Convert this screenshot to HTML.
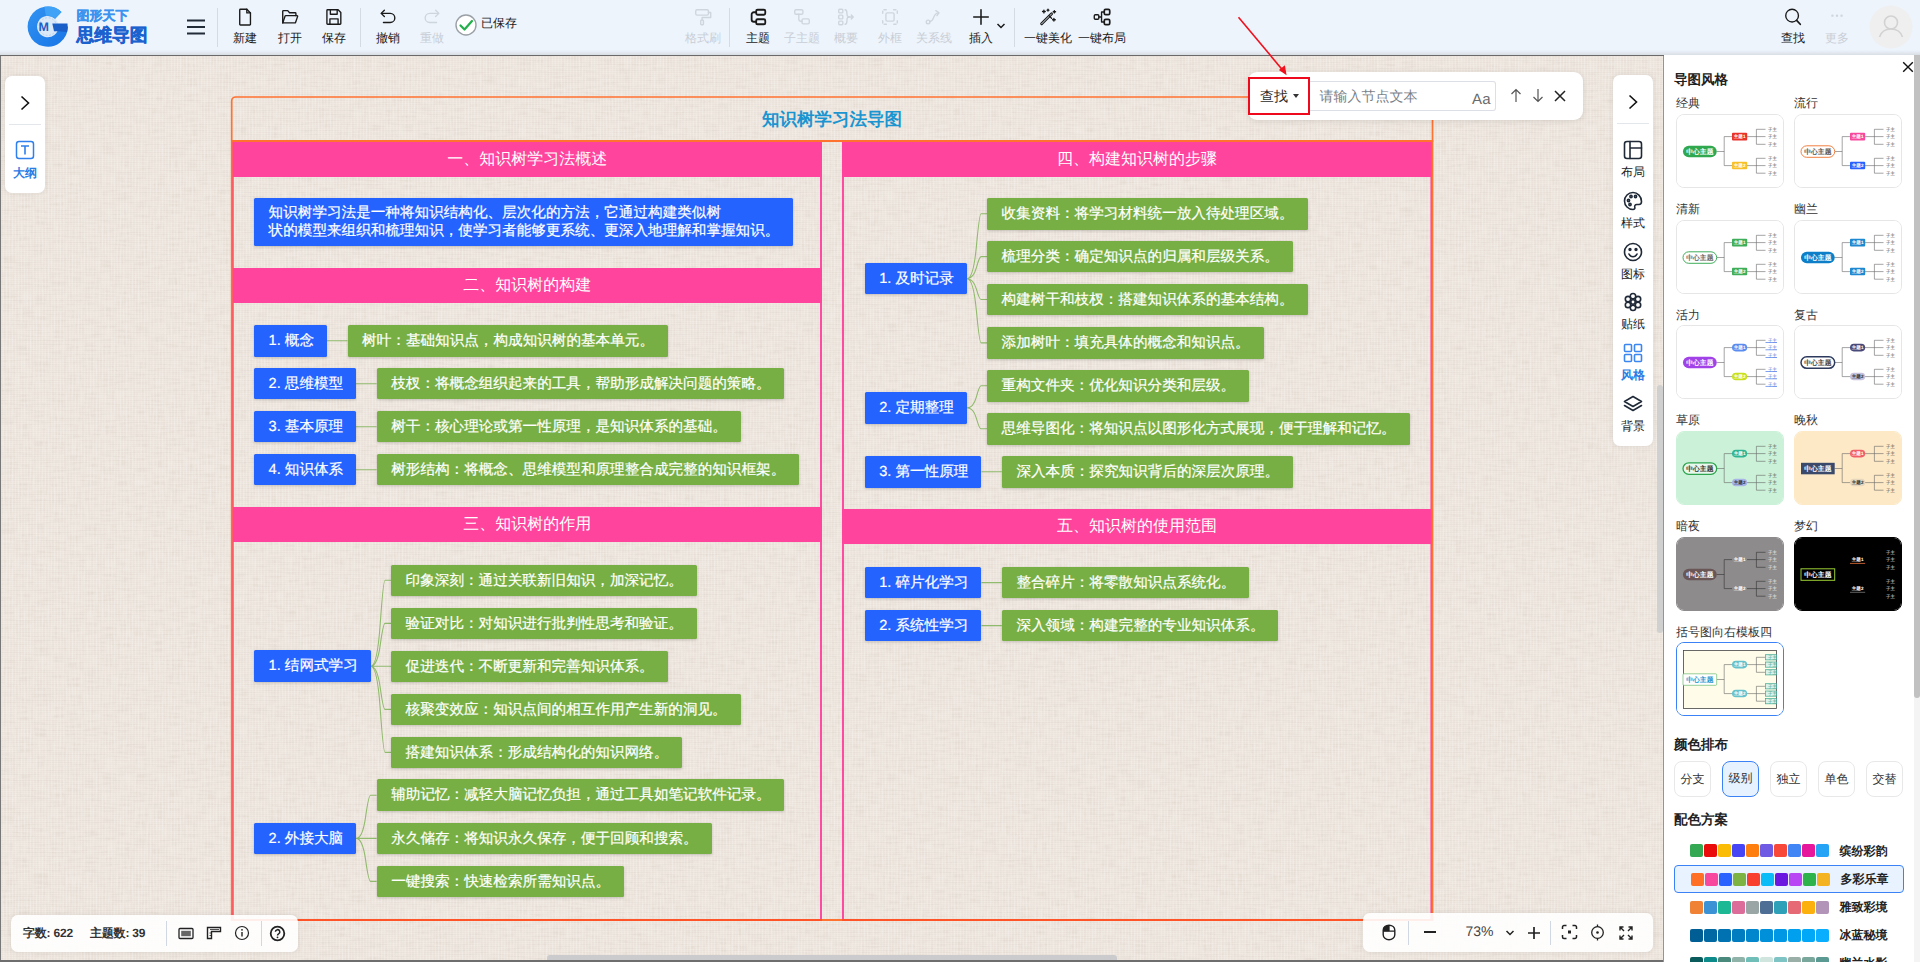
<!DOCTYPE html>
<html lang="zh"><head><meta charset="utf-8"><title>思维导图</title>
<style>
*{box-sizing:border-box;margin:0;padding:0}
html,body{width:1920px;height:962px;overflow:hidden}
body{text-rendering:geometricPrecision;font-family:"Liberation Sans",sans-serif;background:#edf4fc;position:relative;color:#1a1a1a}
.abs{position:absolute}
#toolbar{position:absolute;left:0;top:0;width:1920px;height:55px;background:#edf4fc}
#tbshadow{position:absolute;left:0;top:50px;width:1920px;height:5px;background:linear-gradient(to bottom,rgba(205,208,214,0),rgba(205,208,214,.6))}
#tbline{position:absolute;left:0;top:55px;width:1664px;height:1px;background:#6a6a6a}
.tb{position:absolute;top:0;height:55px;width:60px;margin-left:-30px;text-align:center}
.tb svg{position:absolute;left:50%;top:7px;margin-left:-10px;width:20px;height:20px;fill:none;stroke:#1a1a1a;stroke-width:1.5;stroke-linecap:round;stroke-linejoin:round}
.tb span{position:absolute;left:-10px;right:-10px;top:31px;font-size:12px;line-height:15px;color:#1a1a1a;white-space:nowrap}
.tb.dis svg{stroke:#cfd5dc}
.tb.dis span{color:#c9ced5}
.vsep{position:absolute;top:8px;width:1px;height:39px;background:#d5dbe3}
#canvas{position:absolute;left:0;top:56px;width:1664px;height:906px;overflow:hidden;background-color:#ede5dd;background-image:repeating-linear-gradient(0deg,rgba(255,255,255,.13) 0 1px,rgba(255,255,255,0) 1px 2px),repeating-linear-gradient(90deg,rgba(255,255,255,.10) 0 1px,rgba(120,95,70,.02) 1px 3px)}
#canvas .tex{position:absolute;left:0;top:0;width:100%;height:100%}
.panel{position:absolute;background:#fff;border-radius:7px;box-shadow:0 0 6px rgba(0,0,0,.08)}
.node{position:absolute;color:#fff;font-size:14.6px;line-height:17.5px;white-space:nowrap;border-radius:1.5px;padding:8px 0 0 14.6px;-webkit-text-stroke:.2px #fff;box-shadow:0 1px 3px rgba(0,0,0,.18)}
.bl{background:#2563ff}
.gr{background:#78af44}
.hd{position:absolute;background:#ff449e;color:#fff;font-size:16px;line-height:35px;text-align:center;height:35px;white-space:nowrap}
.ib{position:absolute;left:0;width:40px;text-align:center}
.ib svg{position:absolute;left:9px;width:22px;height:22px;fill:none;stroke:#1f2937;stroke-width:1.6;stroke-linecap:round;stroke-linejoin:round}
.ib span{position:absolute;left:0;width:40px;font-size:12px;line-height:14px;color:#222}
#rp{position:absolute;left:1664px;top:56px;width:256px;height:906px;background:#fff;overflow:hidden}
.rl{position:absolute;font-size:12px;line-height:14px;color:#333;white-space:nowrap}
.rh{position:absolute;font-size:13.5px;line-height:16px;color:#222;font-weight:bold;white-space:nowrap}
.card{position:absolute;width:108px;height:74px;border-radius:8px;border:1px solid #e6e6e6;background:#fff;overflow:hidden}
.cbtn{position:absolute;top:705px;width:37px;height:36px;border:1px solid #e8e8e8;border-radius:8px;font-size:12px;line-height:34px;text-align:center;color:#333;background:#fff}
.sw{position:absolute;height:13px}
.sw i{position:absolute;top:0;width:13px;height:13px;border-radius:2px}
.swl{position:absolute;left:175px;font-size:12px;line-height:14px;font-weight:bold;color:#222;white-space:nowrap}
</style></head>
<body>
<div id="toolbar">
<svg class="abs" style="left:27px;top:6px;width:42px;height:42px" viewBox="0 0 42 42">
<defs><linearGradient id="lg1" x1="0" y1="0" x2="1" y2="1"><stop offset="0" stop-color="#2f8ff0"/><stop offset="1" stop-color="#1a78e8"/></linearGradient></defs>
<circle cx="20.8" cy="20.6" r="10.800" fill="#dbe8f8"/>
<circle cx="20.8" cy="20.6" r="8.800" fill="none" stroke="#a9c8ee" stroke-width=".7" stroke-dasharray="2 1.500"/>
<path d="M31.30 9.34A15.4 15.4 0 1 0 36.20 20.60" fill="none" stroke="url(#lg1)" stroke-width="9.400"/>
<path d="M31.30 9.34A15.4 15.4 0 0 0 18.13 5.43" fill="none" stroke="#3fa2f7" stroke-width="9.400"/>
<path d="M25.300 17.400H40.500A20 20 0 0 1 40 26L31 25.200H27z" fill="#1a5fc8"/>
<text x="11.400" y="25.300" font-family="Liberation Sans, sans-serif" font-weight="bold" font-size="12.500" fill="#1c5fc9">M</text>
</svg>
<div class="abs" style="left:76.500px;top:9px;font-size:13px;line-height:14px;font-weight:bold;color:#3d94ef;white-space:nowrap;-webkit-text-stroke:.35px #3d94ef">图形天下</div>
<div class="abs" style="left:76.500px;top:24px;font-size:17.800px;line-height:22px;font-weight:bold;color:#1b62cf;white-space:nowrap;-webkit-text-stroke:.5px #1b62cf">思维导图</div>
<svg class="abs" style="left:186px;top:19px;width:20px;height:16px" viewBox="0 0 20 16"><path d="M1 1.500h18M1 8h18M1 14.500h18" stroke="#222b38" stroke-width="1.800" fill="none"/></svg>
<div class="vsep" style="left:217px"></div>
<div class="tb" style="left:245px"><svg viewBox="0 0 22 22" style=""><path d="M6 2.5h7l4 4v12.5a.8.8 0 0 1-.8.8H6a.8.8 0 0 1-.8-.8V3.3a.8.8 0 0 1 .8-.8z"/><path d="M13 2.5v4h4"/></svg><span>新建</span></div>
<div class="tb" style="left:290px"><svg viewBox="0 0 22 22" style=""><path d="M3 17.5V4.8a.8.8 0 0 1 .8-.8h4.7l2 2.3h6.2a.8.8 0 0 1 .8.8v2.4"/><path d="M3 17.5l2.6-7.5a.8.8 0 0 1 .8-.5h12.4a.6.6 0 0 1 .6.8l-2.3 6.7a.8.8 0 0 1-.8.5z"/></svg><span>打开</span></div>
<div class="tb" style="left:334px"><svg viewBox="0 0 22 22" style=""><path d="M4 3h11.5l3 3v12.2a.8.8 0 0 1-.8.8H4a.8.8 0 0 1-.8-.8V3.8A.8.8 0 0 1 4 3z"/><path d="M7 3v5h7.5V3"/><path d="M6.5 19v-6h9v6"/></svg><span>保存</span></div>
<div class="vsep" style="left:360px"></div>
<div class="tb" style="left:388px"><svg viewBox="0 0 22 22" style=""><path d="M7 3.5L3.5 7 7 10.5"/><path d="M3.8 7h9.7a5 5 0 0 1 0 10H6"/></svg><span>撤销</span></div>
<div class="tb dis" style="left:432px"><svg viewBox="0 0 22 22" style=""><path d="M15 3.5L18.500 7 15 10.500"/><path d="M18.200 7H8.500a5 5 0 0 0 0 10H16"/></svg><span>重做</span></div>
<svg class="abs" style="left:454px;top:13px;width:24px;height:24px" viewBox="0 0 24 24"><circle cx="12" cy="12" r="10" fill="#fff" stroke="#9aa0a6" stroke-width="1.400"/><path d="M6.500 12.500l4 4 7.500-8.500" stroke="#21b04b" stroke-width="2.200" fill="none" stroke-linecap="round" stroke-linejoin="round"/></svg>
<div class="abs" style="left:481px;top:16px;font-size:12px;line-height:15px;color:#1a1a1a;white-space:nowrap">已保存</div>
<div class="tb dis" style="left:703px"><svg viewBox="0 0 22 22" style=""><rect x="3" y="3" width="14" height="6" rx="1.500"/><path d="M17 6h2.500v5.500H10v3"/><rect x="8.500" y="14.500" width="3" height="5" rx=".8"/></svg><span>格式刷</span></div>
<div class="vsep" style="left:729px"></div>
<div class="tb" style="left:758px"><svg viewBox="0 0 22 22" style=""><rect x="9" y="3" width="10" height="5.500" rx="1.500" stroke-width="2"/><rect x="9" y="13.500" width="10" height="5.500" rx="1.500" stroke-width="2"/><path d="M9 5.750H6.500A2.500 2.500 0 0 0 4 8.250v5.500a2.500 2.500 0 0 0 2.500 2.500H9" stroke-width="2"/></svg><span>主题</span></div>
<div class="tb dis" style="left:802px"><svg viewBox="0 0 22 22" style=""><rect x="3" y="3" width="9" height="5" rx="1.500"/><rect x="11" y="13" width="8" height="5.500" rx="1.500"/><path d="M7.500 8v5.500a2.200 2.200 0 0 0 2.200 2.200H11"/></svg><span>子主题</span></div>
<div class="tb dis" style="left:846px"><svg viewBox="0 0 22 22" style=""><rect x="3" y="2.500" width="4.500" height="4" rx="1"/><rect x="3" y="9" width="4.500" height="4" rx="1"/><rect x="3" y="15.500" width="4.500" height="4" rx="1"/><path d="M10 3c2 0 2 2 2 4s0 4 2.500 4c-2.500 0-2.500 2-2.500 4s0 4-2 4"/><path d="M14.500 11H19M16.800 8.700L19 11l-2.200 2.300"/></svg><span>概要</span></div>
<div class="tb dis" style="left:890px"><svg viewBox="0 0 22 22" style=""><path d="M3 7V4.500A1.500 1.500 0 0 1 4.500 3H7M15 3h2.500A1.500 1.500 0 0 1 19 4.500V7M19 15v2.500a1.500 1.500 0 0 1-1.500 1.500H15M7 19H4.500A1.500 1.500 0 0 1 3 17.500V15" stroke-dasharray="2.500 2"/><rect x="6.500" y="6.500" width="9" height="9" rx="1.500"/></svg><span>外框</span></div>
<div class="tb dis" style="left:934px"><svg viewBox="0 0 22 22" style=""><circle cx="4.500" cy="16.500" r="2"/><path d="M6.500 16c5 0 3-9 9-9.500"/><path d="M13 4l3.500 2.300-2.300 3.200"/></svg><span>关系线</span></div>
<div class="tb" style="left:981px"><svg viewBox="0 0 22 22" style=""><path d="M11 3v16M3 11h16" stroke-width="1.700"/></svg><span>插入</span></div>
<svg class="abs" style="left:996px;top:22px;width:10px;height:8px" viewBox="0 0 10 8"><path d="M1.500 2l3.500 3.500L8.500 2" stroke="#1a1a1a" stroke-width="1.500" fill="none"/></svg>
<div class="vsep" style="left:1014px"></div>
<div class="tb" style="left:1048px"><svg viewBox="0 0 22 22" style=""><path d="M4 18.500L15 7.500" stroke-width="3.200"/><path d="M4 18.500L15 7.500" stroke="#edf4fc" stroke-width="1"/><path d="M12.500 10l2.500 2.500"/><path d="M6.500 3.500v3M5 5h3M17.500 12.500v3M16 14h3M11 2.500v2M10 3.500h2M18 4v2.500M16.800 5.200h2.500"/></svg><span>一键美化</span></div>
<div class="tb" style="left:1102px"><svg viewBox="0 0 22 22" style=""><rect x="2.500" y="8.500" width="5" height="5" rx="1.200"/><rect x="13.500" y="2.500" width="6" height="6" rx="1.500" stroke-width="1.900"/><rect x="13.500" y="13.500" width="6" height="6" rx="1.500" stroke-width="1.900"/><path d="M7.500 11h3M10.500 5.500v11M10.500 5.500h3M10.500 16.500h3"/></svg><span>一键布局</span></div>
<div class="tb" style="left:1793px"><svg viewBox="0 0 22 22" style=""><circle cx="10" cy="9.500" r="7"/><path d="M15 14.800l4 4.200" stroke-width="1.900"/></svg><span>查找</span></div>
<div class="tb dis" style="left:1837px"><svg viewBox="0 0 22 22" style=""><circle cx="6" cy="9.500" r=".6"/><circle cx="11" cy="9.500" r=".6"/><circle cx="16" cy="9.500" r=".6"/></svg><span>更多</span></div>
<svg class="abs" style="left:1869px;top:5px;width:44px;height:44px" viewBox="0 0 44 44"><circle cx="22" cy="22" r="21.500" fill="#efefef"/><circle cx="22" cy="17.500" r="6.500" fill="none" stroke="#d2d2d2" stroke-width="1.600"/><path d="M10.500 32c2-6 6-8 11.500-8s9.500 2 11.500 8" fill="none" stroke="#d2d2d2" stroke-width="1.600"/></svg>
<div id="tbshadow"></div></div><div id="tbline"></div>
<div id="canvas">
<svg class="tex" width="1664" height="906"><defs>
<filter id="lin" x="0" y="0" width="100%" height="100%"><feTurbulence type="fractalNoise" baseFrequency="0.06 0.5" numOctaves="1" seed="3" result="a"/><feColorMatrix in="a" type="matrix" values="0 0 0 0 0.45  0 0 0 0 0.38  0 0 0 0 0.30  0 0 0 -1.6 0.95" result="ha"/>
<feTurbulence type="fractalNoise" baseFrequency="0.5 0.06" numOctaves="1" seed="8" result="b"/><feColorMatrix in="b" type="matrix" values="0 0 0 0 1  0 0 0 0 1  0 0 0 0 1  0 0 0 1.6 -0.62" result="vb"/>
<feMerge><feMergeNode in="ha"/><feMergeNode in="vb"/></feMerge></filter></defs>
<rect width="1664" height="906" filter="url(#lin)" opacity=".2"/></svg>
<svg class="abs" style="left:0;top:0" width="1664" height="906" fill="none">
<path d="M232.800 86V863.5M821 86V863.5M843 86V863.5M1431.400 86V863.5" stroke="#ff449e" stroke-width="1.900"/>
<path d="M231.700 864V45a4 4 0 0 1 4-4H1428.500a4 4 0 0 1 4 4V864" stroke="#ff7230" stroke-width="1.700"/>
<path d="M231 85H1433.300" stroke="#ff7230" stroke-width="1.900"/>
<path d="M230.900 864H1433.400" stroke="#ff7230" stroke-width="1.900"/>
<path d="M231 864H822M842 864H1433" stroke="#ff5428" stroke-width="1.900"/>
</svg>
<div class="abs" style="left:232px;top:51px;width:1200px;text-align:center;font-size:17.5px;line-height:24px;font-weight:bold;color:#1b95d0;white-space:nowrap">知识树学习法导图</div>
<div class="hd" style="left:232.8px;top:86px;width:588.8px">一、知识树学习法概述</div>
<div class="hd" style="left:232.8px;top:211.5px;width:588.8px">二、知识树的构建</div>
<div class="hd" style="left:232.8px;top:451px;width:588.8px">三、知识树的作用</div>
<div class="hd" style="left:842.4px;top:86px;width:589px">四、构建知识树的步骤</div>
<div class="hd" style="left:842.4px;top:453px;width:589px">五、知识树的使用范围</div>
<svg class="abs" style="left:0;top:0" width="1664" height="906" fill="none"><path d="M327 284.7H347.5M356 327.7H376.6M356 370.7H376.6M356 413.7H376.6M981.4 415.8H1001.8M981.4 526.6H1001.8M981.4 569.6H1001.8M370.8 610.2Q377.264 610.2 380.264 567.2T385 524.2H391M370.8 610.2Q377.264 610.2 380.264 588.8T385 567.4H391M370.8 610.2H391M370.8 610.2Q377.264 610.2 380.264 631.8T385 653.4H391M370.8 610.2Q377.264 610.2 380.264 653.3T385 696.4H391M356 782.4Q362.592 782.4 365.592 760.8T370.6 739.2H376.6M356 782.4H376.6M356 782.4Q362.592 782.4 365.592 803.9T370.6 825.4H376.6M967 222.7Q973.4 222.7 976.4 190.2T981 157.7H987M967 222.7Q973.4 222.7 976.4 211.64999999999998T981 200.60000000000002H987M967 222.7Q973.4 222.7 976.4 233.10000000000002T981 243.5H987M967 222.7Q973.4 222.7 976.4 254.79999999999995T981 286.9H987M967 351.8Q973.4 351.8 976.4 340.8T981 329.8H987M967 351.8Q973.4 351.8 976.4 362.3T981 372.8H987" stroke="#90ba6c" stroke-width="1.100"/></svg>
<div class="node bl" style="left:254px;top:142.2px;width:539px;height:47.5px;padding-top:7px">知识树学习法是一种将知识结构化、层次化的方法，它通过构建类似树<br>状的模型来组织和梳理知识，使学习者能够更系统、更深入地理解和掌握知识。</div>
<div class="node bl" style="left:254px;top:269px;width:73px;height:31.5px">1. 概念</div>
<div class="node gr" style="left:347.5px;top:269px;width:320.5px;height:31.5px">树叶：基础知识点，构成知识树的基本单元。</div>
<div class="node bl" style="left:254px;top:311.9px;width:102px;height:31.5px">2. 思维模型</div>
<div class="node gr" style="left:376.6px;top:311.9px;width:407.8px;height:31.5px">枝杈：将概念组织起来的工具，帮助形成解决问题的策略。</div>
<div class="node bl" style="left:254px;top:354.9px;width:102px;height:31.5px">3. 基本原理</div>
<div class="node gr" style="left:376.6px;top:354.9px;width:364.2px;height:31.5px">树干：核心理论或第一性原理，是知识体系的基础。</div>
<div class="node bl" style="left:254px;top:397.8px;width:102px;height:31.5px">4. 知识体系</div>
<div class="node gr" style="left:376.6px;top:397.8px;width:422.4px;height:31.5px">树形结构：将概念、思维模型和原理整合成完整的知识框架。</div>
<div class="node bl" style="left:254px;top:594.4px;width:116.8px;height:31.5px">1. 结网式学习</div>
<div class="node gr" style="left:391px;top:508.5px;width:306px;height:31.5px">印象深刻：通过关联新旧知识，加深记忆。</div>
<div class="node gr" style="left:391px;top:551.6px;width:306px;height:31.5px">验证对比：对知识进行批判性思考和验证。</div>
<div class="node gr" style="left:391px;top:594.6px;width:277px;height:31.5px">促进迭代：不断更新和完善知识体系。</div>
<div class="node gr" style="left:391px;top:637.6px;width:349.8px;height:31.5px">核聚变效应：知识点间的相互作用产生新的洞见。</div>
<div class="node gr" style="left:391px;top:680.6px;width:291.4px;height:31.5px">搭建知识体系：形成结构化的知识网络。</div>
<div class="node bl" style="left:254px;top:766.6px;width:102px;height:31.5px">2. 外接大脑</div>
<div class="node gr" style="left:376.6px;top:723.4px;width:407.8px;height:31.5px">辅助记忆：减轻大脑记忆负担，通过工具如笔记软件记录。</div>
<div class="node gr" style="left:376.6px;top:766.6px;width:335.2px;height:31.5px">永久储存：将知识永久保存，便于回顾和搜索。</div>
<div class="node gr" style="left:376.6px;top:809.6px;width:247.7px;height:31.5px">一键搜索：快速检索所需知识点。</div>
<div class="node bl" style="left:864.6px;top:206.89999999999998px;width:102.4px;height:31.5px">1. 及时记录</div>
<div class="node gr" style="left:987px;top:142px;width:320.6px;height:31.5px">收集资料：将学习材料统一放入待处理区域。</div>
<div class="node gr" style="left:987px;top:184.9px;width:306px;height:31.5px">梳理分类：确定知识点的归属和层级关系。</div>
<div class="node gr" style="left:987px;top:227.8px;width:320.6px;height:31.5px">构建树干和枝杈：搭建知识体系的基本结构。</div>
<div class="node gr" style="left:987px;top:271.1px;width:277px;height:31.5px">添加树叶：填充具体的概念和知识点。</div>
<div class="node gr" style="left:987px;top:314px;width:262.4px;height:31.5px">重构文件夹：优化知识分类和层级。</div>
<div class="node gr" style="left:987px;top:357px;width:423px;height:31.5px">思维导图化：将知识点以图形化方式展现，便于理解和记忆。</div>
<div class="node bl" style="left:864.6px;top:336px;width:102.4px;height:31.5px">2. 定期整理</div>
<div class="node bl" style="left:864.6px;top:400px;width:116.8px;height:31.5px">3. 第一性原理</div>
<div class="node gr" style="left:1001.8px;top:400px;width:291.2px;height:31.5px">深入本质：探究知识背后的深层次原理。</div>
<div class="node bl" style="left:864.6px;top:510.79999999999995px;width:116.8px;height:31.5px">1. 碎片化学习</div>
<div class="node gr" style="left:1001.8px;top:510.79999999999995px;width:247.6px;height:31.5px">整合碎片：将零散知识点系统化。</div>
<div class="node bl" style="left:864.6px;top:553.8px;width:116.8px;height:31.5px">2. 系统性学习</div>
<div class="node gr" style="left:1001.8px;top:553.8px;width:276.7px;height:31.5px">深入领域：构建完整的专业知识体系。</div>
<div class="abs" style="left:0;top:0;width:1px;height:906px;background:#777"></div>
<div class="abs" style="left:0;top:904px;width:1664px;height:2px;background:#6e6e6e"></div>
<div class="abs" style="left:1663px;top:0;width:1px;height:906px;background:#989393"></div>
<div class="abs" style="left:547px;top:899px;width:570px;height:5px;background:#cbcbcd;border-radius:3px 3px 0 0"></div>
<div class="abs" style="left:1657px;top:329px;width:5.500px;height:248px;background:#d0d0d0;border-radius:3px"></div>
<div class="panel" style="left:5px;top:19.5px;width:40px;height:117px">
<svg class="abs" style="left:10px;top:17px;width:20px;height:20px" viewBox="0 0 20 20"><path d="M6.500 3.500L13.500 10 6.500 16.500" fill="none" stroke="#111" stroke-width="1.600"/></svg>
<div class="abs" style="left:4px;top:48px;width:32px;height:1px;background:#e3e6ea"></div>
<svg class="abs" style="left:10px;top:64px;width:20px;height:20px" viewBox="0 0 20 20"><rect x="1.500" y="1.500" width="17" height="17" rx="2.500" fill="none" stroke="#2f80ed" stroke-width="1.500"/><path d="M6 6h8M10 6v8.500" fill="none" stroke="#2f80ed" stroke-width="1.600"/></svg>
<div class="abs" style="left:0;top:90px;width:40px;text-align:center;font-size:12px;line-height:14px;color:#2b7be4;font-weight:bold">大纲</div>
</div>
<div class="panel" style="left:1613px;top:19px;width:40px;height:371px"><svg class="abs" style="left:10px;top:17px;width:20px;height:20px" viewBox="0 0 20 20"><path d="M6.500 3.500L13.500 10 6.500 16.500" fill="none" stroke="#111" stroke-width="1.600"/></svg><div class="abs" style="left:4px;top:48px;width:32px;height:1px;background:#e3e6ea"></div><div class="ib"><svg viewBox="0 0 22 22" style="top:64px;stroke:#1f2937;"><rect x="2.500" y="2.500" width="17" height="17" rx="2.500"/><path d="M8 2.500v17M8 9h11.500"/></svg><span style="top:90px;color:#222">布局</span></div><div class="ib"><svg viewBox="0 0 22 22" style="top:115px;stroke:#1f2937;"><path d="M11 2.500a8.500 8.500 0 1 0 0 17c1.500 0 2.200-1 1.800-2.200-.5-1.500.3-2.800 2-2.800h2.200c1.500 0 2.500-1 2.500-3 0-5-4-9-8.500-9z"/><circle cx="6.500" cy="10.500" r="1.100"/><circle cx="9" cy="6.500" r="1.100"/><circle cx="13.500" cy="6.500" r="1.100"/><circle cx="8" cy="14.500" r="1.100"/></svg><span style="top:141px;color:#222">样式</span></div><div class="ib"><svg viewBox="0 0 22 22" style="top:166px;stroke:#1f2937;"><circle cx="11" cy="11" r="8.500"/><path d="M7 13c1 2 2.500 2.800 4 2.800s3-.8 4-2.800"/><circle cx="8" cy="8.500" r=".9" fill="#1f2937"/><circle cx="14" cy="8.500" r=".9" fill="#1f2937"/></svg><span style="top:192px;color:#222">图标</span></div><div class="ib"><svg viewBox="0 0 22 22" style="top:216px;stroke:#1f2937;"><circle cx="11" cy="11" r="2.200"/><circle cx="11" cy="5.200" r="2.700"/><circle cx="11" cy="16.800" r="2.700"/><circle cx="6" cy="8.100" r="2.700"/><circle cx="16" cy="8.100" r="2.700"/><circle cx="6" cy="13.900" r="2.700"/><circle cx="16" cy="13.900" r="2.700"/></svg><span style="top:242px;color:#222">贴纸</span></div><div class="ib"><svg viewBox="0 0 22 22" style="top:267px;stroke:#3b86f0;"><rect x="2.500" y="2.500" width="7" height="7" rx="1"/><rect x="12.500" y="2.500" width="7" height="7" rx="1"/><rect x="2.500" y="12.500" width="7" height="7" rx="1"/><rect x="12.500" y="12.500" width="7" height="7" rx="1"/></svg><span style="top:293px;color:#2b7be4;font-weight:bold">风格</span></div><div class="ib"><svg viewBox="0 0 22 22" style="top:318px;stroke:#1f2937;"><path d="M11 3.500L2.500 8.500 11 13.500l8.500-5z"/><path d="M2.500 12.500L11 17.500l8.500-5"/></svg><span style="top:344px;color:#222">背景</span></div></div>
<div class="panel" style="left:1248px;top:16px;width:334.500px;height:47.500px;border-radius:9px;box-shadow:0 1px 6px rgba(0,0,0,.10)">
<div class="abs" style="left:61px;top:9px;width:187px;height:30px;border:1px solid #dcdfe6;border-left:none;border-radius:0 3px 3px 0"></div>
<div class="abs" style="left:0;top:5px;width:62px;height:37.500px;border:2px solid #ee0a1c"></div>
<div class="abs" style="left:12px;top:15.500px;font-size:14px;line-height:16px;color:#2a2a2a;white-space:nowrap">查找</div>
<svg class="abs" style="left:44px;top:21px;width:8px;height:6px" viewBox="0 0 8 6"><path d="M1 1h6L4 5z" fill="#333"/></svg>
<div class="abs" style="left:71.500px;top:15.500px;font-size:14px;line-height:16px;color:#7a7f87;white-space:nowrap">请输入节点文本</div>
<div class="abs" style="left:224px;top:17.500px;font-size:15px;line-height:20px;color:#6a6a6a;letter-spacing:.2px">Aa</div>
<svg class="abs" style="left:260px;top:15px;width:16px;height:17px" viewBox="0 0 16 17"><path d="M8 15V2.500M3.500 7L8 2.500 12.500 7" fill="none" stroke="#555" stroke-width="1.200"/></svg>
<svg class="abs" style="left:282px;top:15px;width:16px;height:17px" viewBox="0 0 16 17"><path d="M8 2v12.500M3.500 10L8 14.500 12.500 10" fill="none" stroke="#555" stroke-width="1.200"/></svg>
<svg class="abs" style="left:305px;top:16.500px;width:14px;height:14px" viewBox="0 0 14 14"><path d="M2 2l10 10M12 2L2 12" fill="none" stroke="#222" stroke-width="1.500"/></svg>
</div>
<div class="panel" style="left:11px;top:858.5px;width:286.500px;height:37px;background:rgba(255,255,255,.9)">
<div class="abs" style="left:12px;top:11px;font-size:12px;line-height:14px;font-weight:bold;color:#333;white-space:nowrap;letter-spacing:-.2px">字数: 622</div>
<div class="abs" style="left:79px;top:11px;font-size:12px;line-height:14px;font-weight:bold;color:#333;white-space:nowrap;letter-spacing:-.2px">主题数: 39</div>
<div class="abs" style="left:155px;top:6px;width:1px;height:25px;background:#cfd8e3"></div>
<svg class="abs" style="left:167px;top:12px;width:16px;height:13px" viewBox="0 0 16 13"><rect x="1" y="1.500" width="14" height="10" rx="1" fill="none" stroke="#222" stroke-width="1.300"/><rect x="3.200" y="3.800" width="9.600" height="5.400" fill="#666"/></svg>
<svg class="abs" style="left:195px;top:11px;width:16px;height:14px" viewBox="0 0 16 14"><path d="M1.500 1.500h13v4h-9v7h-4z" fill="none" stroke="#222" stroke-width="1.400"/><path d="M4 3.500h9M3.500 7h2M3.500 9.500h2" stroke="#222" stroke-width=".8"/></svg>
<svg class="abs" style="left:223px;top:10.500px;width:16px;height:16px" viewBox="0 0 16 16"><circle cx="8" cy="8" r="6.500" fill="none" stroke="#222" stroke-width="1.200"/><path d="M8 7v4.500" stroke="#222" stroke-width="1.400"/><circle cx="8" cy="4.800" r=".9" fill="#222"/></svg>
<div class="abs" style="left:250px;top:6px;width:1px;height:25px;background:#cfd8e3"></div>
<svg class="abs" style="left:257.500px;top:10px;width:17px;height:17px" viewBox="0 0 17 17"><circle cx="8.500" cy="8.500" r="6.800" fill="none" stroke="#222" stroke-width="1.800"/><path d="M6.400 6.800a2.200 2.200 0 1 1 3.200 2c-.8.400-1.100.8-1.100 1.600" fill="none" stroke="#222" stroke-width="1.500"/><circle cx="8.500" cy="12.300" r=".9" fill="#222"/></svg>
</div>
<div class="panel" style="left:1362.500px;top:856.5px;width:290.500px;height:39px;background:rgba(255,255,255,.9)">
<svg class="abs" style="left:19px;top:11px;width:14px;height:17px" viewBox="0 0 14 17"><path d="M7 1.200c3.200 0 5.800 2 5.800 5v4.500a5.800 5 0 0 1-11.600 0V6.200c0-3 2.600-5 5.800-5z" fill="none" stroke="#222" stroke-width="1.400"/><path d="M1.200 7.200h11.600M7 1.200v6" stroke="#222" stroke-width="1.300"/><path d="M7 1.200v6H1.200v-1c0-3 2.600-5 5.800-5z" fill="#222"/></svg>
<div class="abs" style="left:45.500px;top:8px;width:1px;height:24px;background:#cfd8e3"></div>
<div class="abs" style="left:61px;top:18.500px;width:12.500px;height:2px;background:#222"></div>
<div class="abs" style="left:92px;top:10px;width:50px;text-align:center;font-size:14px;line-height:16px;color:#444">73%</div>
<svg class="abs" style="left:142px;top:16px;width:10px;height:8px" viewBox="0 0 10 8"><path d="M1.500 2l3.500 3.500L8.500 2" stroke="#222" stroke-width="1.500" fill="none"/></svg>
<svg class="abs" style="left:164.500px;top:13px;width:14px;height:14px" viewBox="0 0 14 14"><path d="M7 1v12M1 7h12" stroke="#222" stroke-width="1.700"/></svg>
<div class="abs" style="left:187.500px;top:8px;width:1px;height:24px;background:#cfd8e3"></div>
<svg class="abs" style="left:198px;top:11.500px;width:17px;height:16px" viewBox="0 0 17 16"><path d="M1.500 5V3a1.500 1.500 0 0 1 1.500-1.500h2.500M11.500 1.500H14A1.500 1.500 0 0 1 15.500 3v2M15.500 11v2a1.500 1.500 0 0 1-1.500 1.500h-2.500M5.500 14.500H3A1.500 1.500 0 0 1 1.500 13v-2" fill="none" stroke="#222" stroke-width="1.500"/><rect x="7" y="6.500" width="3" height="3" fill="#222"/></svg>
<svg class="abs" style="left:226px;top:11.500px;width:17px;height:17px" viewBox="0 0 17 17"><circle cx="8.500" cy="8.500" r="5.800" fill="none" stroke="#222" stroke-width="1.300"/><circle cx="8.500" cy="8.500" r="1.300" fill="#222"/><path d="M8.500 .5v2.500M8.500 14v2.500" stroke="#222" stroke-width="1.300"/></svg>
<svg class="abs" style="left:256.500px;top:13px;width:14px;height:14px" viewBox="0 0 14 14"><path d="M1 4.500V1h3.500M9.500 1H13v3.500M13 9.500V13H9.500M4.500 13H1V9.500M1 1l4 4M13 1L9 5M13 13L9 9M1 13l4-4" fill="none" stroke="#222" stroke-width="1.400"/></svg>
</div>
</div>
<div id="rp" style="top:55px;height:907px">
<svg class="abs" style="left:238px;top:6px;width:12px;height:12px" viewBox="0 0 12 12"><path d="M1.200 1.200l9.600 9.600M10.800 1.200L1.200 10.800" stroke="#111" stroke-width="1.400" fill="none"/></svg>
<div class="rh" style="left:10px;top:17px">导图风格</div>
<div class="rl" style="left:12px;top:41px">经典</div>
<div class="card" style="left:12px;top:59px"><svg width="108" height="73" viewBox="0 0 108 73" style="position:absolute;left:-1px;top:-.4px"><rect width="108" height="73" fill="#fff"/><path d="M40.500 36.500H48.200M48.200 21.600V50.600M48.200 21.600H56M48.200 50.600H56M71 21.600H80.400M71 50.600H80.400M80.400 14.300V29.300M80.400 43.300V58.200M80.400 14.300H89.500M80.400 21.600H89.500M80.400 29.300H89.500M80.400 43.300H89.500M80.400 50.600H89.500M80.400 58.200H89.500" stroke="#666" stroke-width=".6" fill="none"/><rect x="7" y="30.8" width="33.7" height="11.5" rx="5.75" fill="#2fa84f"/><text x="23.85" y="38.998" text-anchor="middle" font-family="Liberation Sans, sans-serif" font-size="6.8" font-weight="bold" fill="#fff">中心主题</text><rect x="56" y="17.8" width="15.2" height="7.6" rx="1" fill="#e8322a"/><text x="63.6" y="23.256" text-anchor="middle" font-family="Liberation Sans, sans-serif" font-size="4.6" font-weight="bold" fill="#fff">主题1</text><rect x="56" y="46.7" width="15.2" height="7.6" rx="1" fill="#f8c02a"/><text x="63.6" y="52.156" text-anchor="middle" font-family="Liberation Sans, sans-serif" font-size="4.6" font-weight="bold" fill="#fff">主题2</text><text x="92" y="15.9" font-family="Liberation Sans, sans-serif" font-size="4.400" fill="#333">子主</text><text x="92" y="23.200000000000003" font-family="Liberation Sans, sans-serif" font-size="4.400" fill="#333">子主</text><text x="92" y="30.900000000000002" font-family="Liberation Sans, sans-serif" font-size="4.400" fill="#333">子主</text><text x="92" y="44.9" font-family="Liberation Sans, sans-serif" font-size="4.400" fill="#333">子主</text><text x="92" y="52.2" font-family="Liberation Sans, sans-serif" font-size="4.400" fill="#333">子主</text><text x="92" y="59.800000000000004" font-family="Liberation Sans, sans-serif" font-size="4.400" fill="#333">子主</text></svg></div>
<div class="rl" style="left:130px;top:41px">流行</div>
<div class="card" style="left:130px;top:59px"><svg width="108" height="73" viewBox="0 0 108 73" style="position:absolute;left:-1px;top:-.4px"><rect width="108" height="73" fill="#fff"/><path d="M40.500 36.500H48.200M48.200 21.600V50.600M48.200 21.600H56M48.200 50.600H56M71 21.600H80.400M71 50.600H80.400M80.400 14.300V29.300M80.400 43.300V58.200M80.400 14.300H89.500M80.400 21.600H89.500M80.400 29.300H89.500M80.400 43.300H89.500M80.400 50.600H89.500M80.400 58.200H89.500" stroke="#666" stroke-width=".6" fill="none"/><rect x="7" y="30.8" width="33.7" height="11.5" rx="5.75" fill="#fff" stroke="#f08040" stroke-width="1"/><text x="23.85" y="38.998" text-anchor="middle" font-family="Liberation Sans, sans-serif" font-size="6.8" font-weight="bold" fill="#555">中心主题</text><rect x="56" y="17.8" width="15.2" height="7.6" rx="1" fill="#f7489e"/><text x="63.6" y="23.256" text-anchor="middle" font-family="Liberation Sans, sans-serif" font-size="4.6" font-weight="bold" fill="#fff">主题1</text><rect x="56" y="46.7" width="15.2" height="7.6" rx="1" fill="#2962ff"/><text x="63.6" y="52.156" text-anchor="middle" font-family="Liberation Sans, sans-serif" font-size="4.6" font-weight="bold" fill="#fff">主题2</text><text x="92" y="15.9" font-family="Liberation Sans, sans-serif" font-size="4.400" fill="#333">子主</text><text x="92" y="23.200000000000003" font-family="Liberation Sans, sans-serif" font-size="4.400" fill="#333">子主</text><text x="92" y="30.900000000000002" font-family="Liberation Sans, sans-serif" font-size="4.400" fill="#333">子主</text><text x="92" y="44.9" font-family="Liberation Sans, sans-serif" font-size="4.400" fill="#333">子主</text><text x="92" y="52.2" font-family="Liberation Sans, sans-serif" font-size="4.400" fill="#333">子主</text><text x="92" y="59.800000000000004" font-family="Liberation Sans, sans-serif" font-size="4.400" fill="#333">子主</text></svg></div>
<div class="rl" style="left:12px;top:147px">清新</div>
<div class="card" style="left:12px;top:165px"><svg width="108" height="73" viewBox="0 0 108 73" style="position:absolute;left:-1px;top:-.4px"><rect width="108" height="73" fill="#fff"/><path d="M40.500 36.500H48.200M48.200 21.600V50.600M48.200 21.600H56M48.200 50.600H56M71 21.600H80.400M71 50.600H80.400M80.400 14.300V29.300M80.400 43.300V58.200M80.400 14.300H89.500M80.400 21.600H89.500M80.400 29.300H89.500M80.400 43.300H89.500M80.400 50.600H89.500M80.400 58.200H89.500" stroke="#666" stroke-width=".6" fill="none"/><rect x="7" y="30.8" width="33.7" height="11.5" rx="5.75" fill="#fff" stroke="#3fae5a" stroke-width="1"/><text x="23.85" y="38.998" text-anchor="middle" font-family="Liberation Sans, sans-serif" font-size="6.8" font-weight="bold" fill="#666">中心主题</text><rect x="56" y="17.8" width="15.2" height="7.6" rx="1" fill="#3fae5a"/><text x="63.6" y="23.256" text-anchor="middle" font-family="Liberation Sans, sans-serif" font-size="4.6" font-weight="bold" fill="#fff">主题1</text><rect x="56" y="46.7" width="15.2" height="7.6" rx="1" fill="#3fae5a"/><text x="63.6" y="52.156" text-anchor="middle" font-family="Liberation Sans, sans-serif" font-size="4.6" font-weight="bold" fill="#fff">主题2</text><text x="92" y="15.9" font-family="Liberation Sans, sans-serif" font-size="4.400" fill="#333">子主</text><text x="92" y="23.200000000000003" font-family="Liberation Sans, sans-serif" font-size="4.400" fill="#333">子主</text><text x="92" y="30.900000000000002" font-family="Liberation Sans, sans-serif" font-size="4.400" fill="#333">子主</text><text x="92" y="44.9" font-family="Liberation Sans, sans-serif" font-size="4.400" fill="#333">子主</text><text x="92" y="52.2" font-family="Liberation Sans, sans-serif" font-size="4.400" fill="#333">子主</text><text x="92" y="59.800000000000004" font-family="Liberation Sans, sans-serif" font-size="4.400" fill="#333">子主</text></svg></div>
<div class="rl" style="left:130px;top:147px">幽兰</div>
<div class="card" style="left:130px;top:165px"><svg width="108" height="73" viewBox="0 0 108 73" style="position:absolute;left:-1px;top:-.4px"><rect width="108" height="73" fill="#fff"/><path d="M40.500 36.500H48.200M48.200 21.600V50.600M48.200 21.600H56M48.200 50.600H56M71 21.600H80.400M71 50.600H80.400M80.400 14.300V29.300M80.400 43.300V58.200M80.400 14.300H89.500M80.400 21.600H89.500M80.400 29.300H89.500M80.400 43.300H89.500M80.400 50.600H89.500M80.400 58.200H89.500" stroke="#666" stroke-width=".6" fill="none"/><rect x="7" y="30.8" width="33.7" height="11.5" rx="5.75" fill="#0d7fc9"/><text x="23.85" y="38.998" text-anchor="middle" font-family="Liberation Sans, sans-serif" font-size="6.8" font-weight="bold" fill="#fff">中心主题</text><rect x="56" y="17.8" width="15.2" height="7.6" rx="1" fill="#1e88d0"/><text x="63.6" y="23.256" text-anchor="middle" font-family="Liberation Sans, sans-serif" font-size="4.6" font-weight="bold" fill="#fff">主题1</text><rect x="56" y="46.7" width="15.2" height="7.6" rx="1" fill="#1e88d0"/><text x="63.6" y="52.156" text-anchor="middle" font-family="Liberation Sans, sans-serif" font-size="4.6" font-weight="bold" fill="#fff">主题2</text><text x="92" y="15.9" font-family="Liberation Sans, sans-serif" font-size="4.400" fill="#333">子主</text><text x="92" y="23.200000000000003" font-family="Liberation Sans, sans-serif" font-size="4.400" fill="#333">子主</text><text x="92" y="30.900000000000002" font-family="Liberation Sans, sans-serif" font-size="4.400" fill="#333">子主</text><text x="92" y="44.9" font-family="Liberation Sans, sans-serif" font-size="4.400" fill="#333">子主</text><text x="92" y="52.2" font-family="Liberation Sans, sans-serif" font-size="4.400" fill="#333">子主</text><text x="92" y="59.800000000000004" font-family="Liberation Sans, sans-serif" font-size="4.400" fill="#333">子主</text></svg></div>
<div class="rl" style="left:12px;top:253.39999999999998px">活力</div>
<div class="card" style="left:12px;top:270px"><svg width="108" height="73" viewBox="0 0 108 73" style="position:absolute;left:-1px;top:-.4px"><rect width="108" height="73" fill="#fff"/><path d="M40.500 36.500H48.200M48.200 21.600V50.600M48.200 21.600H56M48.200 50.600H56M71 21.600H80.400M71 50.600H80.400M80.400 14.300V29.300M80.400 43.300V58.200M80.400 14.300H89.500M80.400 21.600H89.500M80.400 29.300H89.500M80.400 43.300H89.500M80.400 50.600H89.500M80.400 58.200H89.500" stroke="#666" stroke-width=".6" fill="none"/><rect x="7" y="30.8" width="33.7" height="11.5" rx="5.75" fill="#a142e8"/><text x="23.85" y="38.998" text-anchor="middle" font-family="Liberation Sans, sans-serif" font-size="6.8" font-weight="bold" fill="#fff">中心主题</text><rect x="56" y="17.8" width="15.2" height="7.6" rx="3.8" fill="#5b8def"/><text x="63.6" y="23.256" text-anchor="middle" font-family="Liberation Sans, sans-serif" font-size="4.6" font-weight="bold" fill="#fff">主题1</text><rect x="56" y="46.7" width="15.2" height="7.6" rx="3.8" fill="#c8e020"/><text x="63.6" y="52.156" text-anchor="middle" font-family="Liberation Sans, sans-serif" font-size="4.6" font-weight="bold" fill="#fff">主题2</text><text x="92" y="15.9" font-family="Liberation Sans, sans-serif" font-size="4.400" fill="#4466cc">子主</text><path d="M89.500 16.5H101" stroke="#4a7ae8" stroke-width=".7"/><text x="92" y="23.200000000000003" font-family="Liberation Sans, sans-serif" font-size="4.400" fill="#4466cc">子主</text><path d="M89.500 23.8H101" stroke="#4a7ae8" stroke-width=".7"/><text x="92" y="30.900000000000002" font-family="Liberation Sans, sans-serif" font-size="4.400" fill="#4466cc">子主</text><path d="M89.500 31.5H101" stroke="#4a7ae8" stroke-width=".7"/><text x="92" y="44.9" font-family="Liberation Sans, sans-serif" font-size="4.400" fill="#4466cc">子主</text><path d="M89.500 45.5H101" stroke="#4a7ae8" stroke-width=".7"/><text x="92" y="52.2" font-family="Liberation Sans, sans-serif" font-size="4.400" fill="#4466cc">子主</text><path d="M89.500 52.800000000000004H101" stroke="#4a7ae8" stroke-width=".7"/><text x="92" y="59.800000000000004" font-family="Liberation Sans, sans-serif" font-size="4.400" fill="#4466cc">子主</text><path d="M89.500 60.400000000000006H101" stroke="#4a7ae8" stroke-width=".7"/></svg></div>
<div class="rl" style="left:130px;top:253.39999999999998px">复古</div>
<div class="card" style="left:130px;top:270px"><svg width="108" height="73" viewBox="0 0 108 73" style="position:absolute;left:-1px;top:-.4px"><rect width="108" height="73" fill="#fff"/><path d="M40.500 36.500H48.200M48.200 21.600V50.600M48.200 21.600H56M48.200 50.600H56M71 21.600H80.400M71 50.600H80.400M80.400 14.300V29.300M80.400 43.300V58.200M80.400 14.300H89.500M80.400 21.600H89.500M80.400 29.300H89.500M80.400 43.300H89.500M80.400 50.600H89.500M80.400 58.200H89.500" stroke="#666" stroke-width=".6" fill="none"/><rect x="7" y="30.8" width="33.7" height="11.5" rx="5.75" fill="#fff" stroke="#2d3a5e" stroke-width="1.5"/><text x="23.85" y="38.998" text-anchor="middle" font-family="Liberation Sans, sans-serif" font-size="6.8" font-weight="bold" fill="#444">中心主题</text><rect x="56" y="17.8" width="15.2" height="7.6" rx="3.8" fill="#4a4a7a"/><text x="63.6" y="23.256" text-anchor="middle" font-family="Liberation Sans, sans-serif" font-size="4.6" font-weight="bold" fill="#fff">主题1</text><rect x="56" y="46.7" width="15.2" height="7.6" rx="3.8" fill="#c5c0dc"/><text x="63.6" y="52.156" text-anchor="middle" font-family="Liberation Sans, sans-serif" font-size="4.6" font-weight="bold" fill="#333">主题2</text><text x="92" y="15.9" font-family="Liberation Sans, sans-serif" font-size="4.400" fill="#333">子主</text><text x="92" y="23.200000000000003" font-family="Liberation Sans, sans-serif" font-size="4.400" fill="#333">子主</text><text x="92" y="30.900000000000002" font-family="Liberation Sans, sans-serif" font-size="4.400" fill="#333">子主</text><text x="92" y="44.9" font-family="Liberation Sans, sans-serif" font-size="4.400" fill="#333">子主</text><text x="92" y="52.2" font-family="Liberation Sans, sans-serif" font-size="4.400" fill="#333">子主</text><text x="92" y="59.800000000000004" font-family="Liberation Sans, sans-serif" font-size="4.400" fill="#333">子主</text></svg></div>
<div class="rl" style="left:12px;top:358.4px">草原</div>
<div class="card" style="left:12px;top:376px;border-color:#cbf2d8"><svg width="108" height="73" viewBox="0 0 108 73" style="position:absolute;left:-1px;top:-.4px"><rect width="108" height="73" fill="#cbf2d8"/><path d="M40.500 36.500H48.200M48.200 21.600V50.600M48.200 21.600H56M48.200 50.600H56M71 21.600H80.400M71 50.600H80.400M80.400 14.300V29.300M80.400 43.300V58.200M80.400 14.300H89.500M80.400 21.600H89.500M80.400 29.300H89.500M80.400 43.300H89.500M80.400 50.600H89.500M80.400 58.200H89.500" stroke="#666" stroke-width=".6" fill="none"/><rect x="7" y="30.8" width="33.7" height="11.5" rx="5.75" fill="#e8f8ec" stroke="#2ea44f" stroke-width="1.3"/><text x="23.85" y="38.998" text-anchor="middle" font-family="Liberation Sans, sans-serif" font-size="6.8" font-weight="bold" fill="#333">中心主题</text><rect x="56" y="17.8" width="15.2" height="7.6" rx="3.8" fill="#2fb594"/><text x="63.6" y="23.256" text-anchor="middle" font-family="Liberation Sans, sans-serif" font-size="4.6" font-weight="bold" fill="#fff">主题1</text><rect x="56" y="46.7" width="15.2" height="7.6" rx="3.8" fill="#a8b4e6"/><text x="63.6" y="52.156" text-anchor="middle" font-family="Liberation Sans, sans-serif" font-size="4.6" font-weight="bold" fill="#333">主题2</text><text x="92" y="15.9" font-family="Liberation Sans, sans-serif" font-size="4.400" fill="#333">子主</text><text x="92" y="23.200000000000003" font-family="Liberation Sans, sans-serif" font-size="4.400" fill="#333">子主</text><text x="92" y="30.900000000000002" font-family="Liberation Sans, sans-serif" font-size="4.400" fill="#333">子主</text><text x="92" y="44.9" font-family="Liberation Sans, sans-serif" font-size="4.400" fill="#333">子主</text><text x="92" y="52.2" font-family="Liberation Sans, sans-serif" font-size="4.400" fill="#333">子主</text><text x="92" y="59.800000000000004" font-family="Liberation Sans, sans-serif" font-size="4.400" fill="#333">子主</text></svg></div>
<div class="rl" style="left:130px;top:358.4px">晚秋</div>
<div class="card" style="left:130px;top:376px;border-color:#fde9c5"><svg width="108" height="73" viewBox="0 0 108 73" style="position:absolute;left:-1px;top:-.4px"><rect width="108" height="73" fill="#fde9c5"/><path d="M40.500 36.500H48.200M48.200 21.600V50.600M48.200 21.600H56M48.200 50.600H56M71 21.600H80.400M71 50.600H80.400M80.400 14.300V29.300M80.400 43.300V58.200M80.400 14.300H89.500M80.400 21.600H89.500M80.400 29.300H89.500M80.400 43.300H89.500M80.400 50.600H89.500M80.400 58.200H89.500" stroke="#666" stroke-width=".6" fill="none"/><rect x="7" y="30.8" width="33.7" height="11.5" rx="0" fill="#3b4a6b"/><text x="23.85" y="38.998" text-anchor="middle" font-family="Liberation Sans, sans-serif" font-size="6.8" font-weight="bold" fill="#fff">中心主题</text><rect x="56" y="17.8" width="15.2" height="7.6" rx="3.8" fill="#f0606a"/><text x="63.6" y="23.256" text-anchor="middle" font-family="Liberation Sans, sans-serif" font-size="4.6" font-weight="bold" fill="#fff">主题1</text><rect x="56" y="46.7" width="15.2" height="7.6" rx="3.8" fill="#e6d6bd"/><text x="63.6" y="52.156" text-anchor="middle" font-family="Liberation Sans, sans-serif" font-size="4.6" font-weight="bold" fill="#333">主题2</text><text x="92" y="15.9" font-family="Liberation Sans, sans-serif" font-size="4.400" fill="#333">子主</text><text x="92" y="23.200000000000003" font-family="Liberation Sans, sans-serif" font-size="4.400" fill="#333">子主</text><text x="92" y="30.900000000000002" font-family="Liberation Sans, sans-serif" font-size="4.400" fill="#333">子主</text><text x="92" y="44.9" font-family="Liberation Sans, sans-serif" font-size="4.400" fill="#333">子主</text><text x="92" y="52.2" font-family="Liberation Sans, sans-serif" font-size="4.400" fill="#333">子主</text><text x="92" y="59.800000000000004" font-family="Liberation Sans, sans-serif" font-size="4.400" fill="#333">子主</text></svg></div>
<div class="rl" style="left:12px;top:464px">暗夜</div>
<div class="card" style="left:12px;top:482px;border-color:#8d8b8b"><svg width="108" height="73" viewBox="0 0 108 73" style="position:absolute;left:-1px;top:-.4px"><rect width="108" height="73" fill="#8d8b8b"/><path d="M40.500 36.500H48.200M48.200 21.600V50.600M48.200 21.600H56M48.200 50.600H56M71 21.600H80.400M71 50.600H80.400M80.400 14.300V29.300M80.400 43.300V58.200M80.400 14.300H89.500M80.400 21.600H89.500M80.400 29.300H89.500M80.400 43.300H89.500M80.400 50.600H89.500M80.400 58.200H89.500" stroke="#333" stroke-width=".6" fill="none"/><rect x="7" y="30.8" width="33.7" height="11.5" rx="5.75" fill="#6a5656"/><text x="23.85" y="38.998" text-anchor="middle" font-family="Liberation Sans, sans-serif" font-size="6.8" font-weight="bold" fill="#fff">中心主题</text><rect x="56" y="17.8" width="15.2" height="7.6" rx="3.8" fill="none"/><text x="63.6" y="23.256" text-anchor="middle" font-family="Liberation Sans, sans-serif" font-size="4.6" font-weight="bold" fill="#fff">主题1</text><rect x="56" y="46.7" width="15.2" height="7.6" rx="3.8" fill="none"/><text x="63.6" y="52.156" text-anchor="middle" font-family="Liberation Sans, sans-serif" font-size="4.6" font-weight="bold" fill="#fff">主题2</text><text x="92" y="15.9" font-family="Liberation Sans, sans-serif" font-size="4.400" fill="#fff">子主</text><text x="92" y="23.200000000000003" font-family="Liberation Sans, sans-serif" font-size="4.400" fill="#fff">子主</text><text x="92" y="30.900000000000002" font-family="Liberation Sans, sans-serif" font-size="4.400" fill="#fff">子主</text><text x="92" y="44.9" font-family="Liberation Sans, sans-serif" font-size="4.400" fill="#fff">子主</text><text x="92" y="52.2" font-family="Liberation Sans, sans-serif" font-size="4.400" fill="#fff">子主</text><text x="92" y="59.800000000000004" font-family="Liberation Sans, sans-serif" font-size="4.400" fill="#fff">子主</text></svg></div>
<div class="rl" style="left:130px;top:464px">梦幻</div>
<div class="card" style="left:130px;top:482px;border-color:#000"><svg width="108" height="73" viewBox="0 0 108 73" style="position:absolute;left:-1px;top:-.4px"><rect width="108" height="73" fill="#000"/><rect x="7" y="30.8" width="33.7" height="11.5" rx="0" fill="#000" stroke="#9acd32" stroke-width="1"/><text x="23.85" y="38.998" text-anchor="middle" font-family="Liberation Sans, sans-serif" font-size="6.8" font-weight="bold" fill="#fff">中心主题</text><rect x="56" y="17.8" width="15.2" height="7.6" rx="3.8" fill="none"/><text x="63.6" y="23.256" text-anchor="middle" font-family="Liberation Sans, sans-serif" font-size="4.6" font-weight="bold" fill="#fff">主题1</text><path d="M56 25.4H71.2" stroke="#e8703a" stroke-width=".8"/><rect x="56" y="46.7" width="15.2" height="7.6" rx="3.8" fill="none"/><text x="63.6" y="52.156" text-anchor="middle" font-family="Liberation Sans, sans-serif" font-size="4.6" font-weight="bold" fill="#fff">主题2</text><path d="M56 54.300000000000004H71.2" stroke="#777" stroke-width=".8"/><text x="92" y="15.9" font-family="Liberation Sans, sans-serif" font-size="4.400" fill="#fff">子主</text><text x="92" y="23.200000000000003" font-family="Liberation Sans, sans-serif" font-size="4.400" fill="#fff">子主</text><text x="92" y="30.900000000000002" font-family="Liberation Sans, sans-serif" font-size="4.400" fill="#fff">子主</text><text x="92" y="44.9" font-family="Liberation Sans, sans-serif" font-size="4.400" fill="#fff">子主</text><text x="92" y="52.2" font-family="Liberation Sans, sans-serif" font-size="4.400" fill="#fff">子主</text><text x="92" y="59.800000000000004" font-family="Liberation Sans, sans-serif" font-size="4.400" fill="#fff">子主</text></svg></div>
<div class="rl" style="left:12px;top:569.5px">括号图向右模板四</div>
<div class="card" style="left:12px;top:587px;border:1.500px solid #3b82f6"><svg width="108" height="73" viewBox="0 0 108 73" style="position:absolute;left:-1px;top:-.4px"><rect width="108" height="73" fill="#fff"/><rect x="7.500" y="7.500" width="93" height="58" fill="#fffde9" stroke="#444" stroke-width=".8"/><path d="M40.500 36.500H48.200M48.200 21.600V50.600M48.200 21.600H56M48.200 50.600H56M71 21.600H80.400M71 50.600H80.400M80.400 14.300V29.300M80.400 43.300V58.200M80.400 14.300H89.500M80.400 21.600H89.500M80.400 29.300H89.500M80.400 43.300H89.500M80.400 50.600H89.500M80.400 58.200H89.500" stroke="#666" stroke-width=".6" fill="none"/><rect x="7" y="30.8" width="33.7" height="11.5" rx="1" fill="#fff" stroke="#7bc47f" stroke-width="0.8"/><text x="23.85" y="38.998" text-anchor="middle" font-family="Liberation Sans, sans-serif" font-size="6.8" font-weight="bold" fill="#1b95d0">中心主题</text><rect x="56" y="17.8" width="15.2" height="7.6" rx="3.8" fill="#66c2cc"/><text x="63.6" y="23.256" text-anchor="middle" font-family="Liberation Sans, sans-serif" font-size="4.6" font-weight="bold" fill="#fff">主题1</text><rect x="56" y="46.7" width="15.2" height="7.6" rx="3.8" fill="#66c2cc"/><text x="63.6" y="52.156" text-anchor="middle" font-family="Liberation Sans, sans-serif" font-size="4.6" font-weight="bold" fill="#fff">主题2</text><rect x="89.500" y="11.700000000000001" width="11" height="5.200" fill="#d9f2ea" stroke="#3aa890" stroke-width=".7"/><text x="92" y="15.9" font-family="Liberation Sans, sans-serif" font-size="4.400" fill="#2a8a78">子主</text><rect x="89.500" y="19.0" width="11" height="5.200" fill="#d9f2ea" stroke="#3aa890" stroke-width=".7"/><text x="92" y="23.200000000000003" font-family="Liberation Sans, sans-serif" font-size="4.400" fill="#2a8a78">子主</text><rect x="89.500" y="26.7" width="11" height="5.200" fill="#d9f2ea" stroke="#3aa890" stroke-width=".7"/><text x="92" y="30.900000000000002" font-family="Liberation Sans, sans-serif" font-size="4.400" fill="#2a8a78">子主</text><rect x="89.500" y="40.699999999999996" width="11" height="5.200" fill="#d9f2ea" stroke="#3aa890" stroke-width=".7"/><text x="92" y="44.9" font-family="Liberation Sans, sans-serif" font-size="4.400" fill="#2a8a78">子主</text><rect x="89.500" y="48.0" width="11" height="5.200" fill="#d9f2ea" stroke="#3aa890" stroke-width=".7"/><text x="92" y="52.2" font-family="Liberation Sans, sans-serif" font-size="4.400" fill="#2a8a78">子主</text><rect x="89.500" y="55.6" width="11" height="5.200" fill="#d9f2ea" stroke="#3aa890" stroke-width=".7"/><text x="92" y="59.800000000000004" font-family="Liberation Sans, sans-serif" font-size="4.400" fill="#2a8a78">子主</text></svg></div>
<div class="rh" style="left:10px;top:682px">颜色排布</div>
<div class="cbtn" style="left:10px;top:706px">分支</div>
<div class="cbtn" style="left:58px;top:706px;border:1.500px solid #3b82f6;background:#e6f2ff;line-height:33px">级别</div>
<div class="cbtn" style="left:106px;top:706px">独立</div>
<div class="cbtn" style="left:154px;top:706px">单色</div>
<div class="cbtn" style="left:202px;top:706px">交替</div>
<div class="rh" style="left:10px;top:757px">配色方案</div>
<div class="abs" style="left:10px;top:810.4px;width:230px;height:27.500px;border:1.500px solid #3b82f6;border-radius:4px;background:#e8f3ff"></div>
<div class="sw" style="left:0;top:789.25px;width:256px"><i style="left:26px;background:#34a853"></i><i style="left:40px;background:#ea0b0b"></i><i style="left:54px;background:#fbbc05"></i><i style="left:68px;background:#4646f5"></i><i style="left:82px;background:#ff7f0e"></i><i style="left:96px;background:#6f5be3"></i><i style="left:110px;background:#f8483a"></i><i style="left:124px;background:#4285f4"></i><i style="left:138px;background:#e6179a"></i><i style="left:152px;background:#25a4f5"></i></div>
<div class="swl" style="left:175.5px;top:788.75px">缤纷彩韵</div>
<div class="sw" style="left:0;top:817.5px;width:256px"><i style="left:27px;background:#ff6f26"></i><i style="left:41px;background:#f7489e"></i><i style="left:55px;background:#2962ff"></i><i style="left:69px;background:#7cb342"></i><i style="left:83px;background:#f9402e"></i><i style="left:97px;background:#0bbcf7"></i><i style="left:111px;background:#6b19e0"></i><i style="left:125px;background:#b946f5"></i><i style="left:139px;background:#2eb24a"></i><i style="left:153px;background:#f4b321"></i></div>
<div class="swl" style="left:176.5px;top:817px">多彩乐章</div>
<div class="sw" style="left:0;top:845.5px;width:256px"><i style="left:26px;background:#f08235"></i><i style="left:40px;background:#3b93d6"></i><i style="left:54px;background:#1db894"></i><i style="left:68px;background:#dc6c99"></i><i style="left:82px;background:#9aa5a6"></i><i style="left:96px;background:#4f6e96"></i><i style="left:110px;background:#2ea0b8"></i><i style="left:124px;background:#e66a76"></i><i style="left:138px;background:#fbb00e"></i><i style="left:152px;background:#b394b9"></i></div>
<div class="swl" style="left:175.5px;top:845px">雅致彩境</div>
<div class="sw" style="left:0;top:873.5px;width:256px"><i style="left:26px;background:#005e94"></i><i style="left:40px;background:#0068a3"></i><i style="left:54px;background:#0072b2"></i><i style="left:68px;background:#007cc0"></i><i style="left:82px;background:#0086cd"></i><i style="left:96px;background:#008fd9"></i><i style="left:110px;background:#0098e4"></i><i style="left:124px;background:#00a0ee"></i><i style="left:138px;background:#00a8f7"></i><i style="left:152px;background:#0aaeff"></i></div>
<div class="swl" style="left:175.5px;top:873px">冰蓝秘境</div>
<div class="sw" style="left:0;top:901.5px;width:256px"><i style="left:26px;background:#0a5c5c"></i><i style="left:40px;background:#0d8a8a"></i><i style="left:54px;background:#4a8a7c"></i><i style="left:68px;background:#8fb3a8"></i><i style="left:82px;background:#6fbfb8"></i><i style="left:96px;background:#cfe5de"></i><i style="left:110px;background:#7fc4c4"></i><i style="left:124px;background:#9aafa8"></i><i style="left:138px;background:#7aa79c"></i><i style="left:152px;background:#5a9a92"></i></div>
<div class="swl" style="left:175.5px;top:901px">幽兰水影</div>
<div class="abs" style="left:250px;top:0;width:6px;height:907px;background:#f4f4f4"></div>
<div class="abs" style="left:250px;top:0;width:6px;height:642.500px;background:#c1c1c1;border-radius:0 0 3px 3px"></div>
</div>
<svg class="abs" style="left:1220px;top:0;width:120px;height:90px;z-index:50" viewBox="0 0 120 90"><path d="M18.500 17.200L63 70.500" stroke="#f0101e" stroke-width="1.600" fill="none"/><path d="M66.600 75.300L58.900 69.900 64.900 65.300z" fill="#f0101e"/></svg>
</body></html>
